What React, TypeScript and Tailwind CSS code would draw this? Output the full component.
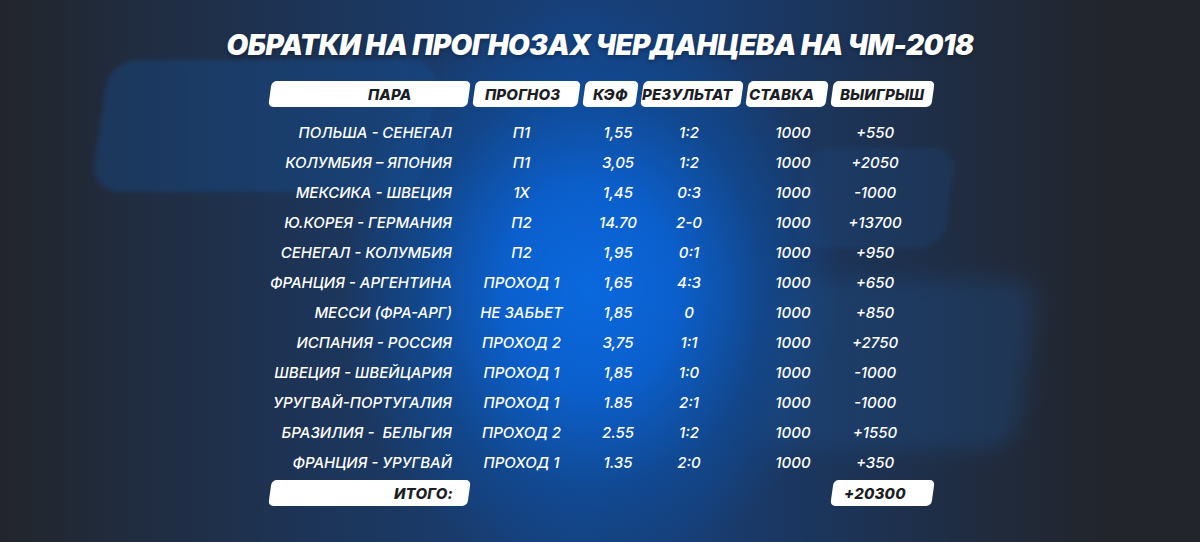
import React from 'react';

type Row = [string, string, string, string, string, string];

const ROWS: Row[] = [
  ['ПОЛЬША - СЕНЕГАЛ', 'П1', '1,55', '1:2', '1000', '+550'],
  ['КОЛУМБИЯ – ЯПОНИЯ', 'П1', '3,05', '1:2', '1000', '+2050'],
  ['МЕКСИКА - ШВЕЦИЯ', '1Х', '1,45', '0:3', '1000', '-1000'],
  ['Ю.КОРЕЯ - ГЕРМАНИЯ', 'П2', '14.70', '2-0', '1000', '+13700'],
  ['СЕНЕГАЛ - КОЛУМБИЯ', 'П2', '1,95', '0:1', '1000', '+950'],
  ['ФРАНЦИЯ - АРГЕНТИНА', 'ПРОХОД 1', '1,65', '4:3', '1000', '+650'],
  ['МЕССИ (ФРА-АРГ)', 'НЕ ЗАБЬЕТ', '1,85', '0', '1000', '+850'],
  ['ИСПАНИЯ - РОССИЯ', 'ПРОХОД 2', '3,75', '1:1', '1000', '+2750'],
  ['ШВЕЦИЯ - ШВЕЙЦАРИЯ', 'ПРОХОД 1', '1,85', '1:0', '1000', '-1000'],
  ['УРУГВАЙ-ПОРТУГАЛИЯ', 'ПРОХОД 1', '1.85', '2:1', '1000', '-1000'],
  ['БРАЗИЛИЯ -  БЕЛЬГИЯ', 'ПРОХОД 2', '2.55', '1:2', '1000', '+1550'],
  ['ФРАНЦИЯ - УРУГВАЙ', 'ПРОХОД 1', '1.35', '2:0', '1000', '+350'],
];

const GRID = 'grid grid-cols-[199px_105px_53px_100px_80px_101px] gap-x-[5px]';

function Pill({ children, className = '' }: { children?: React.ReactNode; className?: string }) {
  return (
    <div className={`h-[26px] rounded-[5px] bg-white -skew-x-[8deg] flex items-center ${className}`}>
      {children && (
        <span className="skew-x-[8deg] italic font-extrabold text-[15px] leading-none text-[#1b1e25] tracking-[0.2px]">
          {children}
        </span>
      )}
    </div>
  );
}

export default function App() {
  return (
    <div className="relative w-[1200px] h-[542px] overflow-hidden bg-[#22252c] font-['Inter','Noto_Sans',sans-serif]">
      {/* background glow */}
      <div className="absolute inset-0 bg-[linear-gradient(90deg,#22252c_0%,#212a3a_8%,#1e3251_22%,#1a3a68_36%,#17407a_48%,#183d72_58%,#1c3458_70%,#202b3e_82%,#22252c_92%)]" />
      <div className="absolute inset-0 bg-[radial-gradient(ellipse_250px_290px_at_590px_290px,#0a69de_0%,#0b5fcc_35%,rgba(12,80,165,0.55)_70%,transparent_100%)]" />

      {/* decorative shapes */}
      <div className="absolute left-[100px] top-[60px] w-[330px] h-[132px] rounded-[28px] -skew-x-[8deg] bg-[#1256a6]/30 blur-[2px]" />
      <div className="absolute left-[800px] top-[148px] w-[150px] h-[100px] rounded-[24px] -skew-x-[8deg] bg-[#1d4c88]/25 blur-[2px]" />
      <div className="absolute left-[770px] top-[280px] w-[258px] h-[170px] rounded-[30px] -skew-x-[8deg] bg-[#1d4c88]/35 blur-[10px]" />

      <div className="relative flex flex-col items-center">
        <h1 className="mt-[28px] h-[34px] leading-[34px] text-white italic font-black text-[28px] tracking-[-0.55px] uppercase [text-shadow:0_2px_4px_rgba(0,0,0,0.3)]">
          ОБРАТКИ НА ПРОГНОЗАХ ЧЕРДАНЦЕВА НА ЧМ-2018
        </h1>

        <div className="mt-[19px] ml-[3px]">
          {/* header */}
          <div className={GRID}>
            <Pill className="justify-center pl-[41px]">ПАРА</Pill>
            <Pill className="justify-center pr-[8px]">ПРОГНОЗ</Pill>
            <Pill className="justify-center">КЭФ</Pill>
            <Pill className="justify-center pr-[9px]">РЕЗУЛЬТАТ</Pill>
            <Pill className="justify-center pr-[10px]">СТАВКА</Pill>
            <Pill className="justify-center">ВЫИГРЫШ</Pill>
          </div>

          {/* rows */}
          <div className="mt-[11px] text-white italic font-medium text-[15px]">
            {ROWS.map((r, i) => (
              <div key={i} className={`${GRID} h-[30px] items-center`}>
                <div className="text-right pr-[17px] whitespace-pre">{r[0]}</div>
                <div className="text-center pr-[10px]">{r[1]}</div>
                <div className="text-center pl-[15px]">{r[2]}</div>
                <div className="text-center pr-[6px]">{r[3]}</div>
                <div className="text-center pl-[12px]">{r[4]}</div>
                <div className="text-center pr-[15px]">{r[5]}</div>
              </div>
            ))}
          </div>

          {/* total */}
          <div className={`${GRID} mt-[2px]`}>
            <Pill className="justify-end pr-[16px]">ИТОГО:</Pill>
            <div />
            <div />
            <div />
            <div />
            <Pill className="justify-center pr-[15px]">+20300</Pill>
          </div>
        </div>
      </div>
    </div>
  );
}
